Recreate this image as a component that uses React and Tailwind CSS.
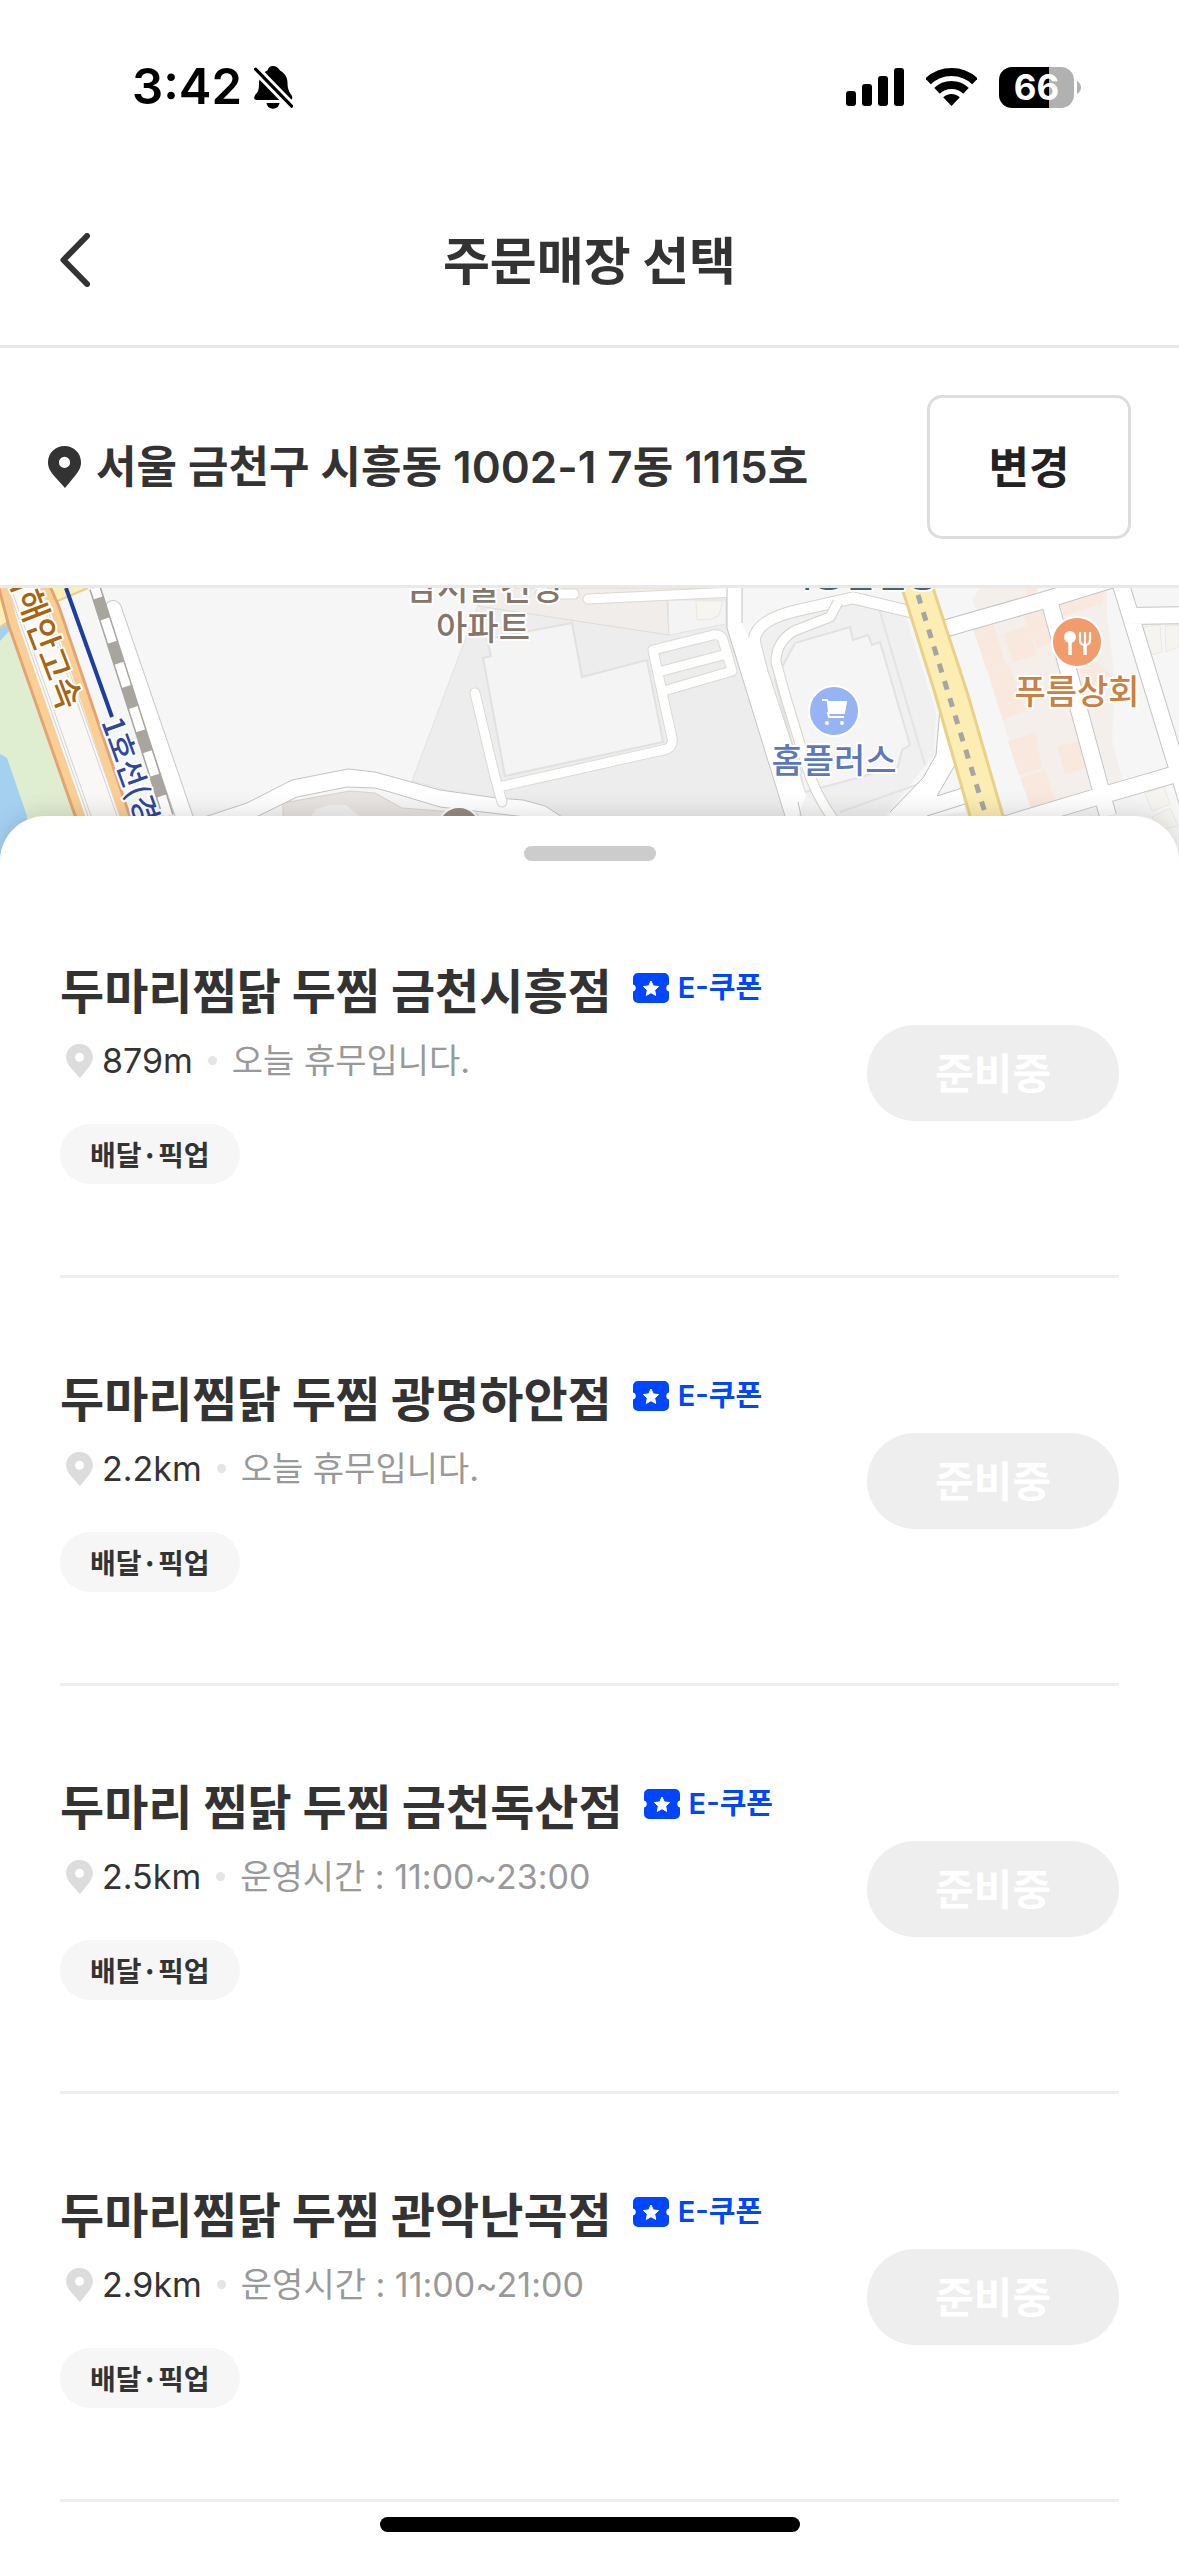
import { useState } from "react";

const stores = [
  { id: 1, name: "두마리찜닭 두찜 금천시흥점", distance: "879m", info: "오늘 휴무입니다." },
  { id: 2, name: "두마리찜닭 두찜 광명하안점", distance: "2.2km", info: "오늘 휴무입니다." },
  { id: 3, name: "두마리 찜닭 두찜 금천독산점", distance: "2.5km", info: "운영시간 : 11:00~23:00" },
  { id: 4, name: "두마리찜닭 두찜 관악난곡점", distance: "2.9km", info: "운영시간 : 11:00~21:00" },
];

const PinIcon = ({ className }) => (
  <svg viewBox="0 0 33 42" className={className} fill="currentColor" aria-hidden="true">
    <path
      fillRule="evenodd"
      d="M16.500 0C7.400 0 0 7.200 0 16.200 0 21.500 2.400 25.300 5.500 29.200L17 42l10.500-12.800C30.600 25.300 33 21.500 33 16.200 33 7.200 25.600 0 16.500 0zm0 10.800a5.600 5.600 0 1 1 0 11.200 5.600 5.600 0 0 1 0-11.200z"
    />
  </svg>
);

const CouponIcon = () => (
  <svg viewBox="0 0 36 30" className="h-[30px] w-9" aria-hidden="true">
    <path
      fill="#0046ff"
      d="M5 0h26a5 5 0 0 1 5 5v6.500a3.600 3.600 0 0 0 0 7V25a5 5 0 0 1-5 5H5a5 5 0 0 1-5-5v-6.500a3.600 3.600 0 0 0 0-7V5a5 5 0 0 1 5-5z"
    />
    <path
      fill="#fff"
      stroke="#fff"
      strokeLinejoin="round"
      d="M18 8l2.300 4.900 5.300.6-3.900 3.600 1 5.300-4.700-2.700-4.700 2.700 1-5.300-3.900-3.600 5.300-.6z"
    />
  </svg>
);

const StatusBar = () => (
  <div className="flex h-[174px] items-center justify-between pr-[98px] pl-[132px] text-black">
    <div className="flex items-center gap-3">
      <span className="font-[Inter] text-[49px] leading-[60px] font-semibold">3:42</span>
      <svg viewBox="0 0 39 43" className="h-[43px] w-[39px]" aria-hidden="true">
        <path d="M19 0c-3 0-5 2-5.500 4.500C8 7 5 12 5 18c0 6-1 8-3.500 10.500C-.5 31-.5 34 3 34h33c3 0 2.800-3.500 1-5.500C34.500 25 33.500 22 33.500 17c0-6-3-10-7.500-12.500C24.500 2 22 0 19 0z" />
        <path d="M12.500 37h13c-.5 3.500-3 5.700-6.500 5.700s-6-2.200-6.500-5.700z" />
        <path d="M1.600 3.200l36 37" stroke="#fff" strokeWidth="9" />
        <path d="M1.600 3.200l36 37" stroke="#000" strokeWidth="3.200" strokeLinecap="round" />
      </svg>
    </div>
    <div className="flex items-center">
      <svg viewBox="0 0 58 38" className="mr-[22px] h-[38px] w-[58px]" aria-hidden="true">
        <rect x="0" y="23" width="10" height="15" rx="3" />
        <rect x="16" y="16" width="10" height="22" rx="3" />
        <rect x="32" y="8" width="10" height="30" rx="3" />
        <rect x="48" y="0" width="10" height="38" rx="3" />
      </svg>
      <svg viewBox="0 0 51 38" className="mr-[22px] h-[38px] w-[51px]" aria-hidden="true">
        <clipPath id="wifi">
          <path d="M25.500 38L-22-12H73z" />
        </clipPath>
        <g clipPath="url(#wifi)" fill="none" stroke="#000" strokeWidth="8">
          <circle cx="25.500" cy="38" r="34" />
          <circle cx="25.500" cy="38" r="21" />
          <circle cx="25.500" cy="38" r="12" fill="#000" stroke="none" />
        </g>
      </svg>
      <div className="flex h-[41px] w-[75px] items-center justify-center rounded-[13px] bg-linear-to-r from-black from-[67%] to-[#b1b1b1] to-[67%] font-[Inter] text-[35px] leading-[41px] font-bold text-white">
        66
      </div>
      <svg viewBox="0 0 4 13" className="ml-[3px] h-[13px] w-1" aria-hidden="true">
        <path d="M0 0c2.500 1.500 4 3.800 4 6.500S2.500 11.500 0 13z" fill="#b1b1b1" />
      </svg>
    </div>
  </div>
);

const Header = () => (
  <header className="grid h-[174px] grid-cols-[1fr_auto_1fr] items-center border-b-3 border-[#e9e9e9] px-[60px]">
    <button type="button" aria-label="뒤로" className="w-[30px]">
      <svg viewBox="0 0 30 54" className="h-[54px] w-[30px]" fill="none" aria-hidden="true">
        <path d="M27 3L3.500 27 27 51" stroke="#333" strokeWidth="6" strokeLinecap="round" strokeLinejoin="round" />
      </svg>
    </button>
    <h1 className="pb-1 text-[51px] leading-[72px] font-bold">주문매장 선택</h1>
  </header>
);

const AddressBar = () => (
  <div className="flex h-[240px] items-center justify-between border-b-3 border-[#e9e9e9] px-12">
    <div className="flex items-center gap-[15px]">
      <PinIcon className="h-[42px] w-[33px]" />
      <p className="font-[Inter,'Noto_Sans_CJK_KR',sans-serif] text-[44px] leading-[60px] font-semibold">
        서울 금천구 시흥동 1002-1 7동 1115호
      </p>
    </div>
    <button
      type="button"
      className="h-36 w-[204px] rounded-[15px] border-3 border-[#ddd] pb-1 text-[44px] leading-[60px] font-bold text-[#222]"
    >
      변경
    </button>
  </div>
);

const Road = ({ d, width, edge = "#c9c9c9" }) => (
  <>
    <path d={d} stroke={edge} strokeWidth={width + 2} />
    <path d={d} stroke="#fff" strokeWidth={width} />
  </>
);

const MapView = () => (
  <svg
    viewBox="0 588 1179 282"
    preserveAspectRatio="xMidYMin slice"
    className="block h-[282px] w-full bg-[#f6f6f6]"
    fill="none"
    role="img"
    aria-label="지도"
  >
    {/* river, park and expressway */}
    <path d="M0 600H10L90 870H0z" fill="#dfedd0" />
    <path d="M0 622L9 618 10 630 0 641zM0 754L7 758 27 816 27 870H0z" fill="#a5d1f1" />
    <path d="M0 588H10V620L0 626zM45 588H88L55 602z" fill="#fbefb5" />
    <path d="M0 627L12 621M55 602L88 588" stroke="#e6cf86" strokeWidth="2" />
    <path d="M5 588L81 816 99 870H148L128 816 48 588z" fill="#faf8f6" />
    <path d="M8 588L88 816M11 588L91 816M40 588L120 816M37 588L117 816" stroke="#d5d2cf" />
    <path d="M2 586L12 624 79 816 98 870M46 586L56 609 126 816 144 870" stroke="#e3a472" strokeWidth="10" />
    <path d="M4 586L14 624 81 816 100 870M44 586L54 609 124 816 142 870" stroke="#f9cf95" strokeWidth="8" />

    {/* side road and railway */}
    <g strokeLinecap="round">
      <Road d="M113 609L184 816 202 870" width={16} />
    </g>
    <path d="M95 588L168 816" stroke="#a8a49e" strokeWidth="12" />
    <path d="M95 588L168 816" stroke="#fff" strokeWidth="9" />
    <path d="M98 598L168 816" stroke="#a8a49e" strokeWidth="11" strokeDasharray="22 24.500" />
    <path d="M66 588L112 717" stroke="#1f3d9c" strokeWidth="4" />

    {/* apartment complex */}
    <path d="M478 605L412 781 562 820H787L727 628V588H478z" fill="#ededed" stroke="#e2e2e2" />
    <path d="M478 588H727V595L667 600 669 635 478 606z" fill="#f1edea" stroke="#e2dad3" />
    <path d="M668 600H726V624L669 635z" fill="#f4f4f4" stroke="#e3e3e3" />
    <path d="M696 601H723L719 615 712 619 697 620z" fill="#f7f5f0" stroke="#ebe7df" />
    <path d="M483 658L491 656 487 639 572 623 582 677 647 660 663 742 505 776z" fill="#f4f4f4" stroke="#e1e1e1" strokeWidth="2" />
    <path d="M283 803L350 791 375 793 402 808 478 814V870H283z" fill="#e8e4e1" stroke="#d9d3c9" />
    <path d="M310 818L316 809 330 805H346L362 818z" fill="#f1f1f1" />
    <path
      d="M180 825L247 803 292 780 348 769 375 772 440 790 497 798 523 800 545 806 570 822 517 816 440 807 390 792 375 788 347 787 297 797 250 820z"
      fill="#fff"
      stroke="#c4c4c4"
    />
    <g strokeLinecap="round" strokeLinejoin="round">
      <path
        d="M475 693L495 777 502 802M503 786L663 750Q674 748 672 738L663 697 653 650 713 635Q721 634 723 640L732 671 667 690M662 671L723 655M588 599L735 592M540 594H574"
        stroke="#dbd9d1"
        strokeWidth="11"
      />
      <path
        d="M475 693L495 777 502 802M503 786L663 750Q674 748 672 738L663 697 653 650 713 635Q721 634 723 640L732 671 667 690M662 671L723 655M588 599L735 592M540 594H574"
        stroke="#fff"
        strokeWidth="9"
      />
    </g>

    {/* mart block */}
    <path d="M753 640L790 614 853 602 905 614 936 713 934 755 885 816 830 816 800 790z" fill="#f0f0f0" />
    <path
      d="M795 643L850 627 853 640 868 635 872 645 880 642 910 745 902 750 898 767 805 792 775 680z"
      fill="#f5f5f5"
      stroke="#e2e2e2"
      strokeWidth="2"
    />
    <path d="M840 812L930 780M878 605L925 765" stroke="#e4e4e4" strokeWidth="2" />
    <Road d="M912 612L853 598 795 611Q757 620 754 640L762 672 796 775" width={11} edge="#d5d3cb" />
    <Road d="M838 602L830 617 794 631Q776 642 776 662L786 698 804 757Q812 790 835 822" width={9} edge="#d5d3cb" />
    <path d="M727 588V628L785 816H798L806 795 757 655 742 623V588z" fill="#fff" />
    <path d="M727 588V628L785 816M742 588V623M798 802L802 820" stroke="#c4c4c4" />
    <path d="M940 708L936 755 923 778 882 822 965 812 962 788 937 796 955 765z" fill="#fff" />
    <path d="M940 708L936 755 923 778 890 812M962 788L937 796 955 765M927 816L965 804" stroke="#c4c1b8" />

    {/* food street blocks */}
    <path
      d="M973 628L1042 611 1094 788 1032 812zM1058 603L1107 588V615L1115 680 1112 740 1123 782 1110 786zM980 588L972 600 977 610 1033 594 1038 588z"
      fill="#f4efea"
    />
    <path
      d="M973 629L993 622 1005 664 987 670zM1004 634L1028 626 1037 655 1013 662zM1024 617L1042 611 1052 643 1037 648zM988 670L1008 664 1026 710 1003 720zM1008 741L1035 733 1042 768 1019 775zM1057 747L1079 741 1086 768 1065 774zM1020 778L1045 770 1055 801 1032 811zM1060 603L1103 589V603L1064 616zM1025 588H1038L1033 598 1027 596zM1078 665L1096 662 1110 674 1090 690z"
      fill="#f8e8dd"
    />
    <path d="M1143 627L1160 625 1162 652 1150 655zM1165 626L1179 625V647L1166 652zM1145 793L1164 787 1170 804 1152 811zM1152 817L1170 808 1178 826 1160 830z" fill="#f5f4ef" stroke="#eae9e5" />
    <path
      d="M940 630L1045 600 1130 574M1048 596L1108 816M1118 575L1190 810M1128 616L1190 615M960 838L1100 796 1190 770"
      stroke="#c4c4c4"
      strokeWidth="18"
    />
    <path
      d="M940 630L1045 600 1130 574M1048 596L1108 816M1118 575L1190 810M1128 616L1190 615M960 838L1100 796 1190 770"
      stroke="#fff"
      strokeWidth="16"
    />
    <path d="M902 588L934 690 970 816 980 870H1020L1003 816 968 695 933 588z" fill="#fcedb2" />
    <path d="M902 588L934 690 970 816M933 588L968 695 1003 816" stroke="#e8d28a" strokeWidth="3" />
    <path d="M918 595L987 819" stroke="#a5a5a5" strokeWidth="5" strokeDasharray="9 9" />

    {/* poi markers */}
    <circle cx="459" cy="828" r="21" fill="#978b82" stroke="#fff" strokeWidth="2" />
    <circle cx="834" cy="711" r="25" fill="#96b4f3" stroke="#fff" strokeWidth="2" />
    <path d="M822 700H827L828 702H846L844 713H828L829 717H844" stroke="#fff" strokeWidth="2" />
    <path d="M827 702H846L844 713H828z" fill="#fff" />
    <circle cx="827" cy="723" r="2" fill="#fff" />
    <circle cx="842" cy="723" r="2" fill="#fff" />
    <circle cx="1077" cy="642" r="25" fill="#f29b6c" stroke="#fff" strokeWidth="2" />
    <circle cx="1070" cy="637" r="6" fill="#fff" />
    <path d="M1070 640V655M1085 645V655" stroke="#fff" strokeWidth="3.500" />
    <path d="M1080 632V640Q1080 645 1085 645T1090 640V632M1085 632V645" stroke="#fff" strokeWidth="2.200" />

    <g
      className="font-['Noto_Sans_CJK_KR',sans-serif] font-medium"
      fontSize="34"
      textAnchor="middle"
      stroke="#fff"
      strokeWidth="4"
      strokeLinejoin="round"
      paintOrder="stroke"
    >
      <text x="484" y="600" fill="#85766b">남서울건영</text>
      <text x="483" y="640" fill="#85766b">아파트</text>
      <text x="834" y="773" fill="#5b78bc">홈플러스</text>
      <text x="1077" y="704" fill="#c98040">푸름상회</text>
      <text x="860" y="587" fill="#4a6078">시흥한신공</text>
      <text transform="translate(32 639) rotate(69)" fill="#a8640f">서해안고속</text>
      <text transform="translate(101 722) rotate(70)" fontSize="30" textAnchor="start" fill="#2f469f">1호선(경부)</text>
    </g>
  </svg>
);

const StoreItem = ({ store }) => (
  <li className="flex h-[408px] items-center justify-between border-b-3 border-[#eee]">
    <div className="flex flex-col items-start pb-[10px]">
      <div className="mb-[10px] flex items-center gap-[21px]">
        <h2 className="text-[48px] leading-[72px] font-bold">{store.name}</h2>
        <span className="flex items-center gap-[9px] font-[Inter,'Noto_Sans_CJK_KR',sans-serif] text-[29px] leading-[42px] font-semibold text-[#0046ff]">
          <CouponIcon />
          E-쿠폰
        </span>
      </div>
      <div className="flex items-center pl-[6px] font-[Inter,'Noto_Sans_CJK_KR',sans-serif] text-[34px] leading-[54px]">
        <PinIcon className="mr-[9px] h-[34px] w-[27px] text-[#dcdcdc]" />
        <span>{store.distance}</span>
        <span className="mx-[15px] size-[9px] rounded-full bg-[#e5e5e5]" />
        <span className="text-[#999]">{store.info}</span>
      </div>
      <span className="mt-[36px] rounded-full bg-[#f6f6f6] px-[30px] text-[28px] leading-[60px] font-bold">
        배달·픽업
      </span>
    </div>
    <button
      type="button"
      disabled
      className="h-24 w-[252px] rounded-full bg-[#eee] pb-1 text-[42px] leading-[60px] font-bold text-white"
    >
      준비중
    </button>
  </li>
);

const App = () => {
  const [storeList] = useState(stores);

  return (
    <div className="relative h-screen w-full overflow-hidden bg-white font-['Noto_Sans_CJK_KR',sans-serif] text-[#333]">
      <StatusBar />
      <Header />
      <AddressBar />
      <MapView />
      <section className="relative -mt-[54px] rounded-t-[45px] bg-white px-[60px] pt-[30px] shadow-[0_0_27px_rgba(0,0,0,0.16)]">
        <div className="mx-auto mb-[9px] h-[15px] w-[132px] rounded-full bg-[#ccc]" />
        <ul>
          {storeList.map((store) => (
            <StoreItem key={store.id} store={store} />
          ))}
        </ul>
        <div className="h-[54px]" />
      </section>
      {/* home indicator */}
      <div className="absolute bottom-6 left-1/2 h-[15px] w-[420px] -translate-x-1/2 rounded-full bg-black" />
    </div>
  );
};

export default App;
